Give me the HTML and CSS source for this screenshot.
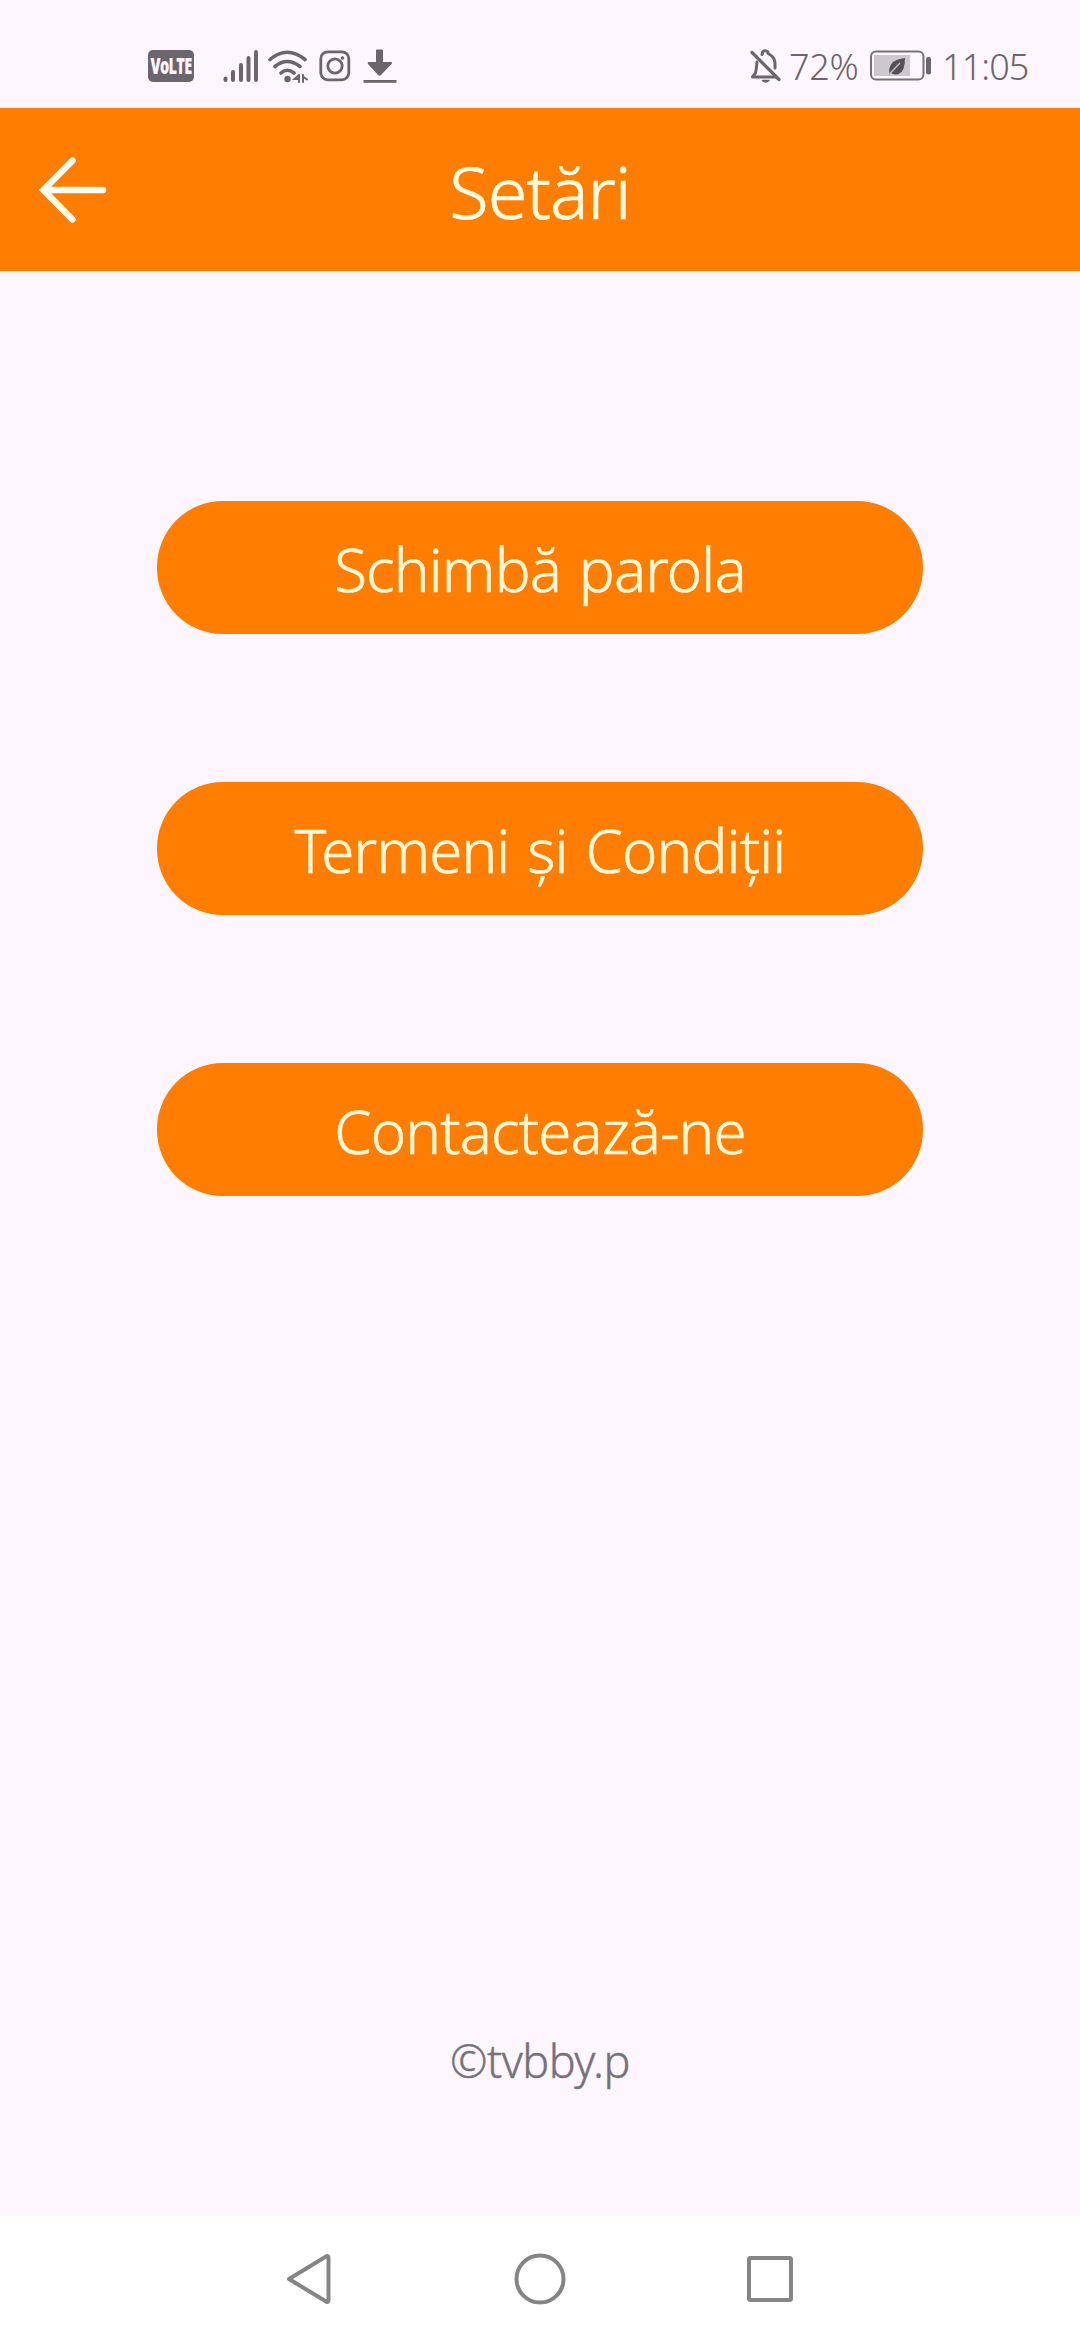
FILE: index.html
```html
<!DOCTYPE html>
<html lang="ro">
<head>
<meta charset="utf-8">
<title>Setări</title>
<link rel="stylesheet" href="styles.css">
</head>
<body>
<div class="screen">
  <div class="status">
    <div class="status-left">
      <span class="volte"><span>VoLTE</span></span>
      <svg class="signal" width="36" height="34" viewBox="0 0 36 34" fill="none" stroke="#6b656d" stroke-width="4" stroke-linecap="round">
        <path d="M2.500 29.500V31M10 23V31M18 16V31M25.500 9V31M33 3V31"/>
      </svg>
      <svg class="wifi" width="40" height="34" viewBox="0 0 40 34" fill="none" stroke="#6b656d" stroke-width="3.600" stroke-linecap="round">
        <path d="M2 10.500Q19 -4 37 10.500M7 17.500Q19 7.500 32 17.500M13 24Q19 18.500 26 24"/>
        <circle cx="19.500" cy="30" r="3.200" fill="#6b656d" stroke="none"/>
        <path d="M31 26L26.500 30H31V26V33M35 26V33M35 27.500L39 30.500" stroke-width="2"/>
      </svg>
      <svg class="insta" width="32" height="32" viewBox="0 0 32 32" fill="none" stroke="#6b656d" stroke-width="2.800">
        <rect x="1.800" y="1.800" width="28" height="28" rx="7"/>
        <circle cx="16" cy="16" r="7.200"/>
        <circle cx="23.500" cy="8" r="1.800" fill="#6b656d" stroke="none"/>
      </svg>
      <svg class="download" width="34" height="36" viewBox="0 0 34 36" fill="#6b656d">
        <path d="M14 1.500H19Q20 1.500 20 2.500V14H28Q30 14.500 28.500 16L18 27Q16.500 28.500 15 27L5 16Q4 14.500 5.500 14H13V2.500Q13 1.500 14 1.500Z"/>
        <rect x="0.500" y="32" width="33" height="2.800"/>
      </svg>
    </div>
    <div class="status-right">
      <svg class="bell" width="32" height="36" viewBox="0 0 32 36" fill="none" stroke="#6b656d" stroke-width="3" stroke-linecap="round" stroke-linejoin="round">
        <path d="M7 14Q6.500 21 5.500 25L2.500 29H26M12 6.500L12.500 5.500V4Q15 1.500 18 4V5.500Q24.500 8.500 25 15V20"/>
        <path d="M2 4.500L29 31.500" stroke-width="3.200"/>
        <path d="M12.500 32.500H19Q15.500 35.500 12.500 32.500Z" stroke-width="1.500" fill="#6b656d"/>
      </svg>
      <span class="percent">72%</span>
      <svg class="battery" width="62" height="32" viewBox="0 0 62 32">
        <rect x="1" y="1.500" width="52.500" height="28" rx="5" fill="none" stroke="#777078" stroke-width="2"/>
        <rect x="4" y="5" width="36" height="21" fill="#cdc8ce"/>
        <path d="M19.500 25Q18 17 23 12Q27 9 35 8Q35 22 28.500 24Q25 25.500 21 23L19.500 25Z" fill="#555057"/>
        <path d="M19.500 24L30 13" stroke="#cdc8ce" stroke-width="1.200"/>
        <rect x="56" y="7" width="5" height="17.500" rx="2.200" fill="#6b656d"/>
      </svg>
      <span class="clock">11:05</span>
    </div>
  </div>
  <header class="header">
    <svg class="back" width="72" height="72" viewBox="0 0 72 72" fill="none" stroke="#fffdf0" stroke-width="6.500" stroke-linecap="round" stroke-linejoin="miter">
      <path d="M36.500 6.500L7.500 36L36.500 65.500M8 36H67"/>
    </svg>
    <h1 class="title">Setări</h1>
  </header>
  <main class="menu">
    <button class="item">Schimbă parola</button>
    <button class="item">Termeni și Condiții</button>
    <button class="item">Contactează-ne</button>
  </main>
  <footer class="credit">©tvbby.p</footer>
  <nav class="nav">
    <svg width="50" height="56" viewBox="0 0 50 56"><path d="M5 28L42.500 5.200Q44.500 4.500 44.500 7V49Q44.500 51.500 42.500 50.800L5 28Z"/></svg>
    <svg width="56" height="56" viewBox="0 0 56 56"><circle cx="28" cy="28" r="23.500"/></svg>
    <svg width="50" height="56" viewBox="0 0 50 56"><rect x="4" y="7" width="42" height="42" rx="1.500"/></svg>
  </nav>
</div>
</body>
</html>
```
FILE: styles.css
```css
* { box-sizing: border-box; }
body {
  margin: 0;
  background: #fdf6ff;
  font-family: "Noto Sans", "Open Sans", sans-serif;
  font-weight: 300;
}
.screen {
  width: 1080px;
  height: 2340px;
  display: flex;
  flex-direction: column;
  overflow: hidden;
}
svg { display: block; flex: none; }
.status {
  height: 108px;
  display: flex;
  justify-content: space-between;
  padding: 0 52px 0 148px;
  color: #6b656d;
}
.status-left, .status-right { display: flex; align-items: center; padding-top: 24px; }
.volte {
  width: 46px;
  height: 32px;
  display: flex;
  justify-content: center;
  border-radius: 5px;
  background: #6b656d;
  color: #fdf6ff;
  font: 800 22px/31px "Open Sans", sans-serif;
  letter-spacing: -1px;
}
.volte span { transform: scaleX(0.66); }
.signal { margin-left: 29px; }
.wifi { margin-left: 9px; }
.insta { margin-left: 11px; }
.download { margin-left: 12px; }
.percent, .clock { padding-top: 2px; font-size: 36px; line-height: 40px; white-space: nowrap; }
.percent { width: 72px; margin-left: 7px; letter-spacing: -0.3px; }
.battery { margin-left: 9px; }
.clock { width: 86px; margin-left: 10px; letter-spacing: -0.9px; }
.header {
  height: 163px;
  display: grid;
  grid-template-columns: 72px 1fr 72px;
  align-items: center;
  padding: 0 36px;
  background: #ff7d00;
}
.title {
  margin: 0;
  padding-top: 3px;
  color: #fffbe0;
  font-size: 72px;
  font-weight: 300;
  line-height: 100px;
  letter-spacing: -1px;
  text-align: center;
  -webkit-text-stroke: 0.7px #fffbe0;
}
.menu {
  flex: 1;
  display: flex;
  flex-direction: column;
  align-items: center;
  gap: 148px;
  padding-top: 230px;
}
.item {
  width: 766px;
  height: 133px;
  padding: 3px 0 0;
  border: 0;
  border-radius: 66px;
  background: #ff7d00;
  color: #fff8d8;
  font: inherit;
  font-size: 60px;
  line-height: 84px;
  letter-spacing: -0.85px;
  word-spacing: 3px;
  white-space: nowrap;
  -webkit-text-stroke: 0.6px #fff8d8;
}
.credit {
  height: 187px;
  color: #77717a;
  font-size: 45px;
  line-height: 64px;
  letter-spacing: -0.5px;
  text-align: center;
  -webkit-text-stroke: 0.4px #77717a;
}
.nav {
  height: 124px;
  display: flex;
  justify-content: space-between;
  align-items: center;
  padding: 2px 285px 0 284px;
  background: #fff;
  fill: none;
  stroke: #858585;
  stroke-width: 4;
  stroke-linejoin: round;
}
```
